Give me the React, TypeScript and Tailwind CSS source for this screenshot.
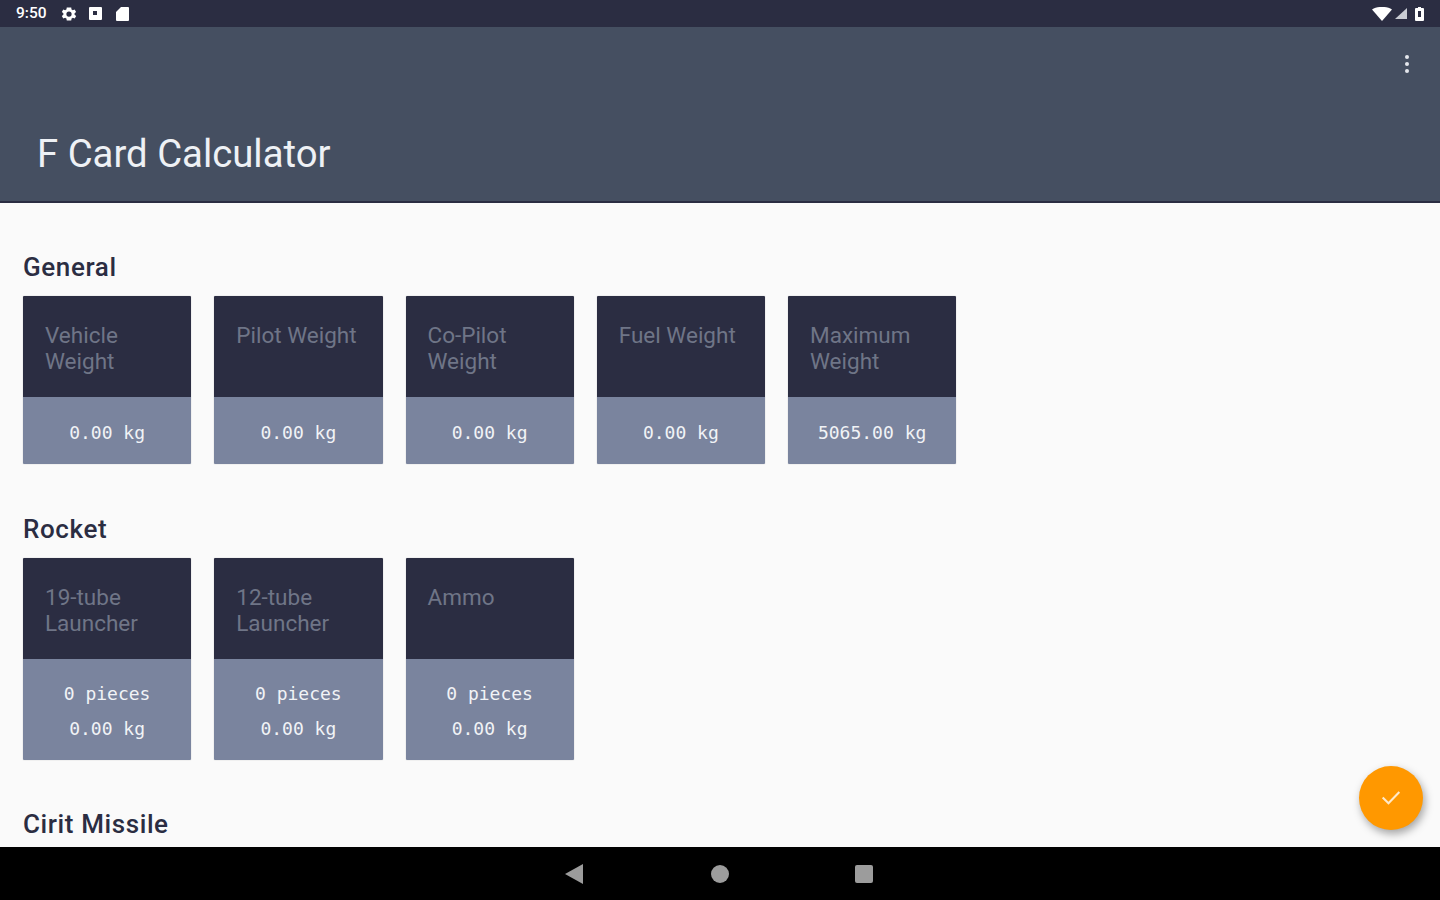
import React from "react";

function Card({ label, lines }: { label: string; lines: string[] }) {
  const two = lines.length > 1;
  return (
    <div className="w-[168.25px] flex flex-col shadow-[0_0_1px_rgba(0,0,0,0.4)] rounded-[1px] overflow-hidden">
      <div className="h-[101px] bg-[#2b2d42] pl-[22px] pr-2 pt-[26px] text-[22.5px] leading-[26px] text-[#6f7587] font-['Roboto',sans-serif]">
        {label}
      </div>
      <div className={`${two ? "h-[101px] gap-[13px] pt-[24px]" : "h-[67px] pt-[25px]"} bg-[#7a849e] flex flex-col items-center text-[18px] leading-[22px] text-[#f1f3f6] font-['DejaVu_Sans_Mono',monospace]`}>
        {lines.map((l) => (
          <div key={l}>{l}</div>
        ))}
      </div>
    </div>
  );
}

function Heading({ children }: { children: React.ReactNode }) {
  return (
    <h2 className="text-[26px] leading-[30px] tracking-[0.6px] font-medium text-[#2b2d42] font-['Roboto',sans-serif]">{children}</h2>
  );
}

export default function App() {
  return (
    <div className="relative w-[1440px] h-[900px] overflow-hidden flex flex-col bg-[#fafafa] font-['Roboto',sans-serif]">
      <div className="h-[27px] shrink-0 bg-[#2b2d42] flex items-center justify-between pl-[16px] pr-[16px]">
        <div className="flex items-center text-white">
          <span className="text-[15.5px] font-medium w-[32px] pt-[1px]">9:50</span>
          <svg className="ml-[12px]" width="18" height="18" viewBox="0 0 24 24" fill="#fff">
            <path fillRule="evenodd" d="M19.4 13a7.5 7.5 0 0 0 0-2l2.1-1.6-2-3.5-2.500 1a7.500 7.500 0 0 0-1.700-1L15 3.200h-6l-.4 2.700a7.500 7.500 0 0 0-1.700 1l-2.500-1-2 3.500L4.500 11a7.500 7.500 0 0 0 0 2l-2.100 1.600 2 3.500 2.500-1a7.500 7.500 0 0 0 1.700 1l.4 2.700h6l.4-2.700a7.500 7.500 0 0 0 1.700-1l2.500 1 2-3.500zM12 15.500a3.500 3.500 0 1 1 0-7 3.500 3.500 0 0 1 0 7z" />
          </svg>
          <svg className="ml-[10px]" width="15" height="15" viewBox="0 0 15 15" fill="#fff">
            <path fillRule="evenodd" d="M2 1h11a1 1 0 0 1 1 1v11a1 1 0 0 1-1 1H2a1 1 0 0 1-1-1V2a1 1 0 0 1 1-1zm3 4v4h4V5z" />
          </svg>
          <svg className="ml-[12px]" width="15" height="16" viewBox="0 0 15 16" fill="#fff">
            <path d="M6 1h7a1 1 0 0 1 1 1v12a1 1 0 0 1-1 1H2a1 1 0 0 1-1-1V6z" />
          </svg>
        </div>
        <div className="flex items-center">
          <svg width="20" height="14" viewBox="0 0 20 14" fill="#fff">
            <path d="M0 2.500C5.500-1 14.500-1 20 2.500L10 14z" />
          </svg>
          <svg className="ml-[3px]" width="12" height="11" viewBox="0 0 12 11" fill="#c9ccd3">
            <path d="M12 0v11H0z" />
          </svg>
          <svg className="ml-[8px]" width="9" height="14" viewBox="0 0 9 14" fill="#fff">
            <path fillRule="evenodd" d="M3 0h3v1h2a1 1 0 0 1 1 1v11a1 1 0 0 1-1 1H1a1 1 0 0 1-1-1V2a1 1 0 0 1 1-1h2zM3 4v6h3V4z" />
          </svg>
        </div>
      </div>

      <div className="h-[176px] shrink-0 bg-[#454f61] border-b-2 border-[#2b2d42] flex flex-col justify-between pl-[37px] pr-[30px]">
        <div className="flex justify-end pt-[27px]">
          <svg width="6" height="20" viewBox="0 0 6 20" fill="#e4e7ec">
            <circle cx="3" cy="3" r="2" />
            <circle cx="3" cy="10" r="2" />
            <circle cx="3" cy="17" r="2" />
          </svg>
        </div>
        <h1 className="text-[38.3px] leading-[44px] text-[#eef1f5] font-normal pb-[25px]">F Card Calculator</h1>
      </div>

      <div className="flex-1 min-h-0 overflow-hidden pl-[23px] pt-[49px]">
        <Heading>General</Heading>
        <div className="flex gap-[23px] mt-[14px]">
          <Card label="Vehicle Weight" lines={["0.00 kg"]} />
          <Card label="Pilot Weight" lines={["0.00 kg"]} />
          <Card label="Co-Pilot Weight" lines={["0.00 kg"]} />
          <Card label="Fuel Weight" lines={["0.00 kg"]} />
          <Card label="Maximum Weight" lines={["5065.00 kg"]} />
        </div>
        <div className="mt-[50px]">
          <Heading>Rocket</Heading>
        </div>
        <div className="flex gap-[23px] mt-[13.500px]">
          <Card label="19-tube Launcher" lines={["0 pieces", "0.00 kg"]} />
          <Card label="12-tube Launcher" lines={["0 pieces", "0.00 kg"]} />
          <Card label="Ammo" lines={["0 pieces", "0.00 kg"]} />
        </div>
        <div className="mt-[49.500px]">
          <Heading>Cirit Missile</Heading>
        </div>
      </div>

      <div className="h-[53px] shrink-0 bg-black flex items-center justify-center gap-[126px]">
        <svg className="-translate-x-[2px]" width="18" height="20" viewBox="0 0 18 20" fill="#9c9c9c">
          <path d="M18 0v20L0 10z" />
        </svg>
        <div className="w-[18px] h-[18px] rounded-full bg-[#9c9c9c]" />
        <div className="w-[18px] h-[18px] rounded-[2px] bg-[#9c9c9c]" />
      </div>

      <button className="absolute left-[1359px] top-[766px] w-[64px] h-[64px] rounded-full bg-[#ff9800] shadow-[2px_4px_8px_rgba(0,0,0,0.35)] flex items-center justify-center">
        <svg className="-mt-[3px]" width="20" height="20" viewBox="0 0 24 24" fill="none" stroke="#ffe9c9" strokeWidth="2.500">
          <path d="M2 12.500l7 7L22 6" />
        </svg>
      </button>
    </div>
  );
}
